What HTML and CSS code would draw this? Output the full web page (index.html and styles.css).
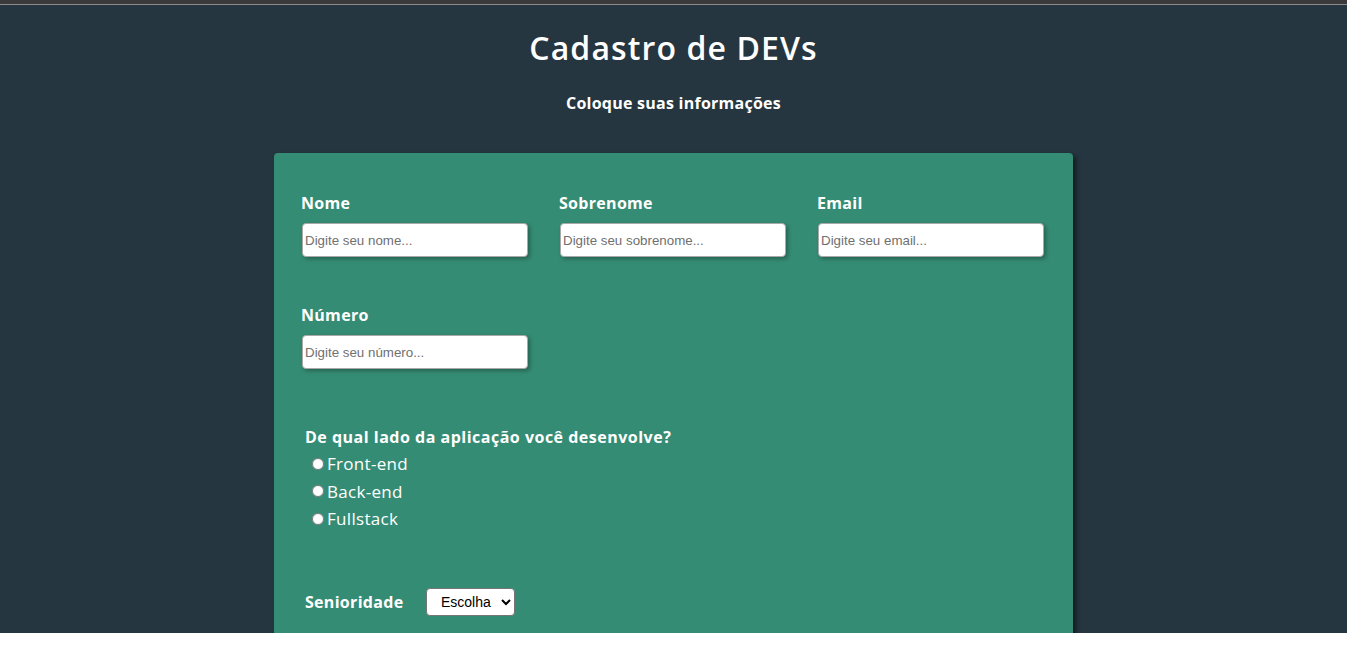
FILE: index.html
```html
<!DOCTYPE html>
<html lang="pt-BR">
<head>
<meta charset="utf-8">
<title>Cadastro de DEVs</title>
<link rel="stylesheet" href="styles.css">
</head>
<body>
<div class="chrome"></div>
<main class="page">
  <header class="head">
    <h1 class="title">Cadastro de DEVs</h1>
    <h4 class="subtitle">Coloque suas informações</h4>
  </header>
  <form class="card">
    <div class="grid">
      <div class="field">
        <label class="label" for="nome">Nome</label>
        <input class="input" id="nome" type="text" placeholder="Digite seu nome...">
      </div>
      <div class="field">
        <label class="label" for="sobrenome">Sobrenome</label>
        <input class="input" id="sobrenome" type="text" placeholder="Digite seu sobrenome...">
      </div>
      <div class="field">
        <label class="label" for="email">Email</label>
        <input class="input" id="email" type="email" placeholder="Digite seu email...">
      </div>
      <div class="field">
        <label class="label" for="numero">Número</label>
        <input class="input" id="numero" type="text" placeholder="Digite seu número...">
      </div>
    </div>
    <div class="question">
      <p class="qtitle">De qual lado da aplicação você desenvolve?</p>
      <label class="opt"><input class="radio" type="radio" name="lado">Front-end</label>
      <label class="opt"><input class="radio" type="radio" name="lado">Back-end</label>
      <label class="opt"><input class="radio" type="radio" name="lado">Fullstack</label>
    </div>
    <div class="senior">
      <label class="slabel" for="sen">Senioridade</label>
      <select class="select" id="sen">
        <option>Escolha</option>
        <option>Júnior</option>
        <option>Pleno</option>
        <option>Sênior</option>
      </select>
    </div>
  </form>
</main>
</body>
</html>
```

FILE: styles.css
```css
html, body {
  margin: 0;
  padding: 0;
  background: #ffffff;
}

body {
  font-family: "Open Sans", "DejaVu Sans", sans-serif;
  height: 657px;
  overflow: hidden;
}

.chrome {
  height: 4px;
  background: #3a3a3a;
  border-bottom: 1px solid #8c8c8c;
}

.page {
  height: 628px;
  background: #253640;
  overflow: hidden;
  display: flex;
  flex-direction: column;
  align-items: center;
}

.head {
  text-align: center;
  color: #ffffff;
}

.title {
  margin: 22px 0 0;
  font-size: 32px;
  line-height: 42px;
  font-weight: 600;
  letter-spacing: 1.1px;
}

.subtitle {
  margin: 23px 0 0;
  font-size: 16px;
  line-height: 22px;
  font-weight: 700;
  letter-spacing: 0.25px;
}

.card {
  margin-top: 39px;
  width: 799px;
  min-height: 520px;
  flex: none;
  box-sizing: border-box;
  background: #358c74;
  border-radius: 4px;
  box-shadow: 3px 3px 5px rgba(0, 0, 0, 0.55);
  padding: 39px 29px 0 27px;
  color: #ffffff;
}

.grid {
  display: grid;
  grid-template-columns: repeat(3, 226px);
  column-gap: 32px;
  row-gap: 47px;
}

.field {
  display: flex;
  flex-direction: column;
}

.label {
  font-size: 16px;
  line-height: 22px;
  font-weight: 700;
  margin-bottom: 9px;
  letter-spacing: 0.3px;
}

.input {
  margin-left: 1px;
  height: 34px;
  box-sizing: border-box;
  width: 226px;
  padding: 1px 2px;
  border: 1px solid #a9a9a9;
  border-radius: 4px;
  background: #ffffff;
  box-shadow: 2px 2px 4px rgba(0, 0, 0, 0.3);
  font-family: "Liberation Sans", Arial, sans-serif;
  font-size: 13.33px;
  color: #000;
}

.input::placeholder {
  color: #707070;
}

.question {
  margin: 57px 0 0 4px;
}

.qtitle {
  margin: 0 0 2px;
  font-size: 16px;
  line-height: 22px;
  font-weight: 700;
  letter-spacing: 0.5px;
}

.opt {
  display: flex;
  align-items: center;
  height: 27.5px;
  font-size: 17px;
  letter-spacing: 0.3px;
  padding-left: 6px;
}

.radio {
  margin: 0 3px 0 1px;
  width: 12px;
  height: 12px;
}

.senior {
  margin: 55px 0 0 4px;
  display: flex;
  align-items: center;
  height: 28px;
}

.slabel {
  font-size: 16px;
  font-weight: 700;
  letter-spacing: 0.3px;
  width: 121px;
}

.select {
  width: 89px;
  height: 28px;
  box-sizing: border-box;
  border: 1px solid #767676;
  border-radius: 4px;
  background: #ffffff;
  padding: 0 0 0 10px;
  font-family: "Liberation Sans", Arial, sans-serif;
  font-size: 14px;
  color: #000;
}
```
